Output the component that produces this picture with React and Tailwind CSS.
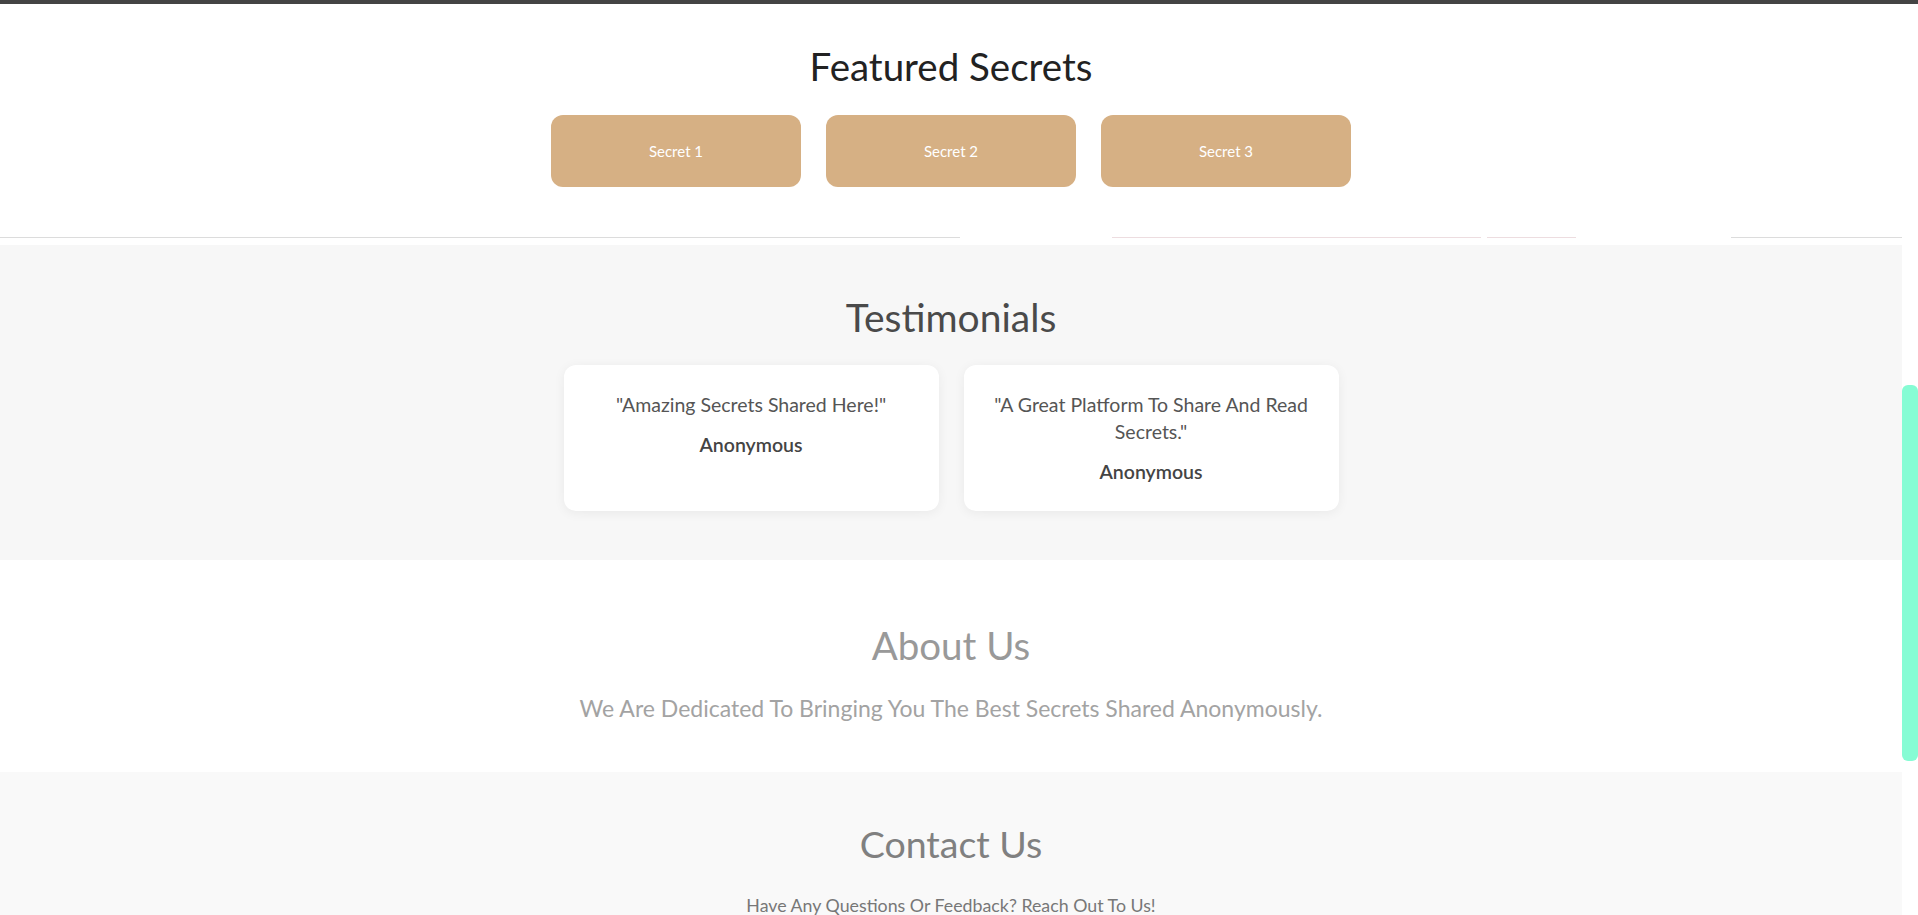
import React from "react";

const secrets = ["Secret 1", "Secret 2", "Secret 3"];

const testimonials = [
  { quote: '"Amazing Secrets Shared Here!"', author: "Anonymous" },
  { quote: '"A Great Platform To Share And Read Secrets."', author: "Anonymous" },
];

const SecretCard = ({ title }) => (
  <div className="w-[250px] h-[72px] rounded-[12px] bg-[#d6b084] text-white text-[15px] flex items-center justify-center">
    {title}
  </div>
);

const Testimonial = ({ item }) => (
  <div className="w-[375px] rounded-[12px] bg-white px-[26px] py-[26px] text-center shadow-[0_2px_12px_rgba(0,0,0,0.06)]">
    <p className="text-[19.5px] leading-[27px] text-[#555]">{item.quote}</p>
    <p className="mt-[13px] text-[19.5px] leading-[27px] font-semibold text-[#444]">
      {item.author}
    </p>
  </div>
);

const App = () => {
  return (
    <div
      className="h-[915px] overflow-hidden bg-white"
      style={{ fontFamily: "Lato, 'Noto Sans', sans-serif" }}
    >
      <div className="h-[4px] bg-[#444]" />
      <div className="flex">
        <main className="w-[1902px] flex-none">
          {/* featured */}
          <section className="pt-[38px] pb-[50px] text-center">
            <h2 className="text-[38.5px] leading-[48px] text-[#222]">Featured Secrets</h2>
            <div className="mt-[25px] flex justify-center gap-[25px]">
              {secrets.map((s) => (
                <SecretCard key={s} title={s} />
              ))}
            </div>
          </section>
          <div className="flex h-px">
            <div className="w-[960px] bg-[#dcdcdc]" />
            <div className="w-[152px]" />
            <div className="w-[369px] bg-[#eddde0]" />
            <div className="w-[6px]" />
            <div className="w-[89px] bg-[#eddde0]" />
            <div className="w-[155px]" />
            <div className="flex-1 bg-[#dcdcdc]" />
          </div>
          <div className="h-[7px]" />

          {/* testimonials */}
          <section className="bg-[#f7f7f7] pt-[48px] pb-[49px] text-center">
            <h2 className="text-[39px] leading-[48px] text-[#4a4a4a]">Testimonials</h2>
            <div className="mt-[24px] flex justify-center gap-[25px]">
              {testimonials.map((t, i) => (
                <Testimonial key={i} item={t} />
              ))}
            </div>
          </section>

          {/* about */}
          <section className="h-[212px] pt-[61px] text-center">
            <h2 className="text-[38.5px] leading-[48px] text-[#999]">About Us</h2>
            <p className="mt-[22px] text-[23px] leading-[34px] text-[#a3a3a3]">
              We Are Dedicated To Bringing You The Best Secrets Shared Anonymously.
            </p>
          </section>

          {/* contact */}
          <section className="bg-[#f9f9f9] pt-[48px] pb-[40px] text-center">
            <h2 className="text-[37.5px] leading-[48px] text-[#808080]">Contact Us</h2>
            <p className="mt-[25px] text-[17.8px] leading-[24px] text-[#777]">
              Have Any Questions Or Feedback? Reach Out To Us!
            </p>
          </section>
        </main>
        <div className="w-[16px] flex-none">
          <div className="mt-[381px] h-[376px] rounded-[6px] bg-[#86fcd4]" />
        </div>
      </div>
    </div>
  );
};

export default App;
